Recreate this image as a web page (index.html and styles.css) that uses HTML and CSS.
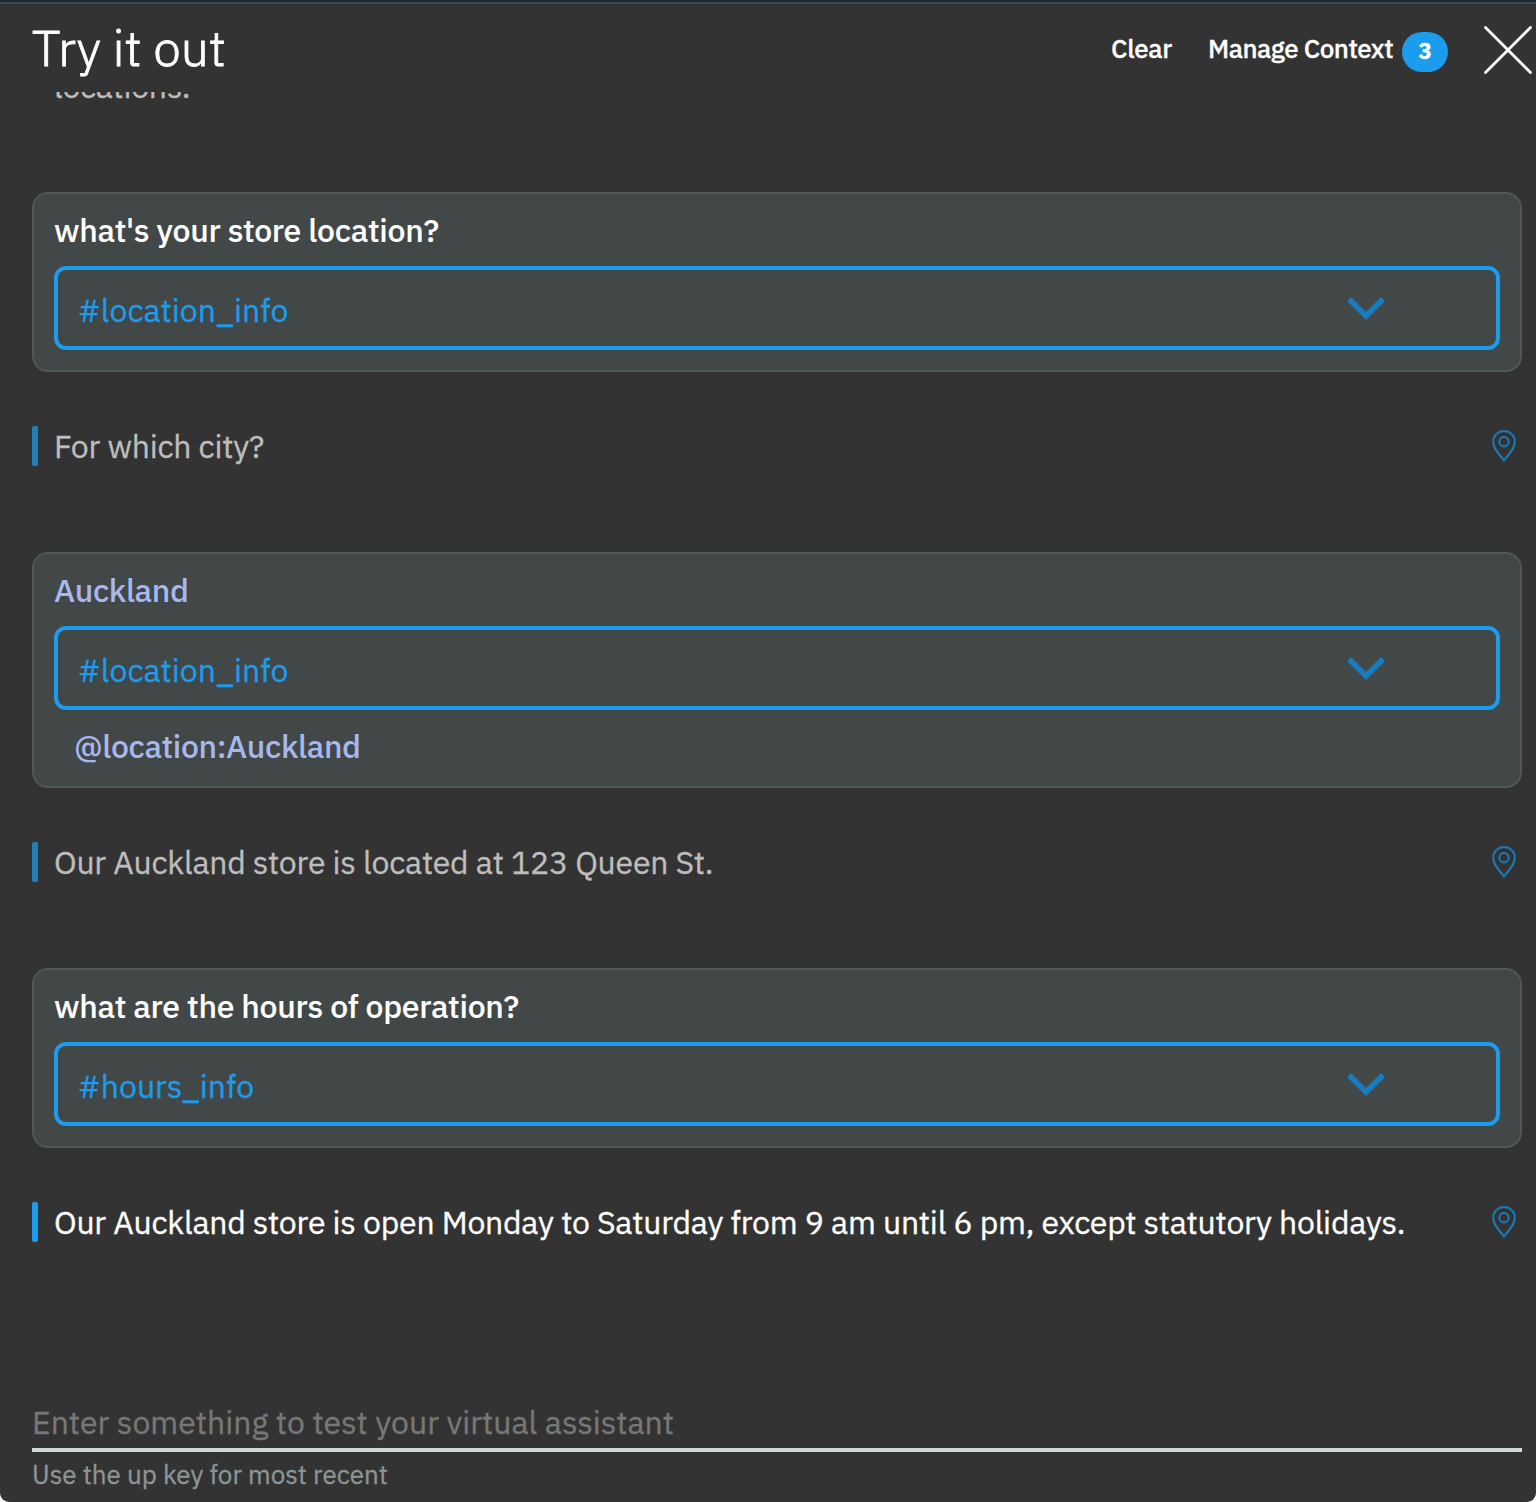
FILE: index.html
```html
<!DOCTYPE html>
<html lang="en">
<head>
<meta charset="utf-8">
<title>Try it out</title>
<link rel="stylesheet" href="styles.css">
</head>
<body>
<svg class="sprite" aria-hidden="true">
  <symbol id="pin" viewBox="0 0 24 32"><path d="M12 1C5.900 1 1.200 5.800 1.200 11.800c0 3 1.100 5.500 2.800 8.400L12 30.500l8-10.300c1.700-2.900 2.800-5.400 2.800-8.400C22.800 5.800 18.100 1 12 1z"/><circle cx="12" cy="11.700" r="4.700"/></symbol>
  <symbol id="chevron" viewBox="0 0 38 23"><path d="M0 3.900 3.900 0 19 15 34.100 0 38 3.900 19 23z"/></symbol>
</svg>
<main class="panel">
  <header class="header">
    <h1 class="title">Try it out</h1>
    <button class="action clear">Clear</button>
    <button class="action manage">Manage Context</button>
    <span class="badge">3</span>
    <button class="close" aria-label="Close"><svg width="48" height="48" viewBox="0 0 48 48"><path d="M1.500 1.500 46.500 46.500M46.500 1.500 1.500 46.500"/></svg></button>
  </header>
  <section class="chat">
    <p class="clipped">locations.</p>
    <article class="card">
      <p class="utterance">what's your store location?</p>
      <div class="intent"><span>#location_info</span><svg class="chevron"><use href="#chevron"/></svg></div>
    </article>
    <div class="reply old"><p>For which city?</p><svg class="pin"><use href="#pin"/></svg></div>
    <article class="card">
      <p class="utterance entity-text">Auckland</p>
      <div class="intent"><span>#location_info</span><svg class="chevron"><use href="#chevron"/></svg></div>
      <p class="entity">@location:Auckland</p>
    </article>
    <div class="reply old"><p>Our Auckland store is located at 123 Queen St.</p><svg class="pin"><use href="#pin"/></svg></div>
    <article class="card">
      <p class="utterance">what are the hours of operation?</p>
      <div class="intent"><span>#hours_info</span><svg class="chevron"><use href="#chevron"/></svg></div>
    </article>
    <div class="reply"><p>Our Auckland store is open Monday to Saturday from 9 am until 6 pm, except statutory holidays.</p><svg class="pin"><use href="#pin"/></svg></div>
  </section>
  <footer class="composer">
    <p class="field">Enter something to test your virtual assistant</p>
    <p class="hint">Use the up key for most recent</p>
  </footer>
</main>
</body>
</html>
```
FILE: styles.css
```css
* { box-sizing: border-box; }
body { margin: 0; background: #fff; font-family: "IBM Plex Sans", Roboto, sans-serif; font-size: 32px; line-height: 40px; color: #fff; -webkit-text-stroke: 0.3px; }
h1, p { margin: 0; font-weight: 400; white-space: nowrap; }
button { padding: 0; border: 0; background: none; color: inherit; font: inherit; }
.sprite { position: absolute; width: 0; height: 0; }
.panel { display: flex; flex-direction: column; height: 1502px; overflow: hidden; background: #333; border-top: 2px solid #1c2936; border-radius: 0 0 9px 9px; }
.header { display: flex; align-items: flex-start; flex: none; height: 90px; padding-left: 32px; border-top: 2px solid #424747; }
.title { flex: 1; padding-top: 14px; font-size: 50px; font-weight: 300; line-height: 60px; -webkit-text-stroke: 0.8px; }
.action { margin-top: 24px; font-size: 26px; font-weight: 500; line-height: 40px; white-space: nowrap; text-align: left; letter-spacing: -0.5px; }
.clear { width: 97px; letter-spacing: -0.35px; }
.manage { width: 194px; }
.badge { width: 46px; height: 40px; margin-top: 28px; border-radius: 20px; background: #1b9cec; font-size: 22px; font-weight: 700; line-height: 37px; text-align: center; }
.close { width: 48px; height: 48px; margin: 22px 4px 0 36px; }
.close svg { display: block; fill: none; stroke: #fff; stroke-width: 2.8; stroke-linecap: round; }
.chat { flex: 1; overflow: hidden; padding: 0 14px 0 32px; }
.clipped { margin-top: -26px; margin-bottom: 86px; padding-left: 22px; color: #bdbdbd; letter-spacing: -0.3px; }
.card { padding: 16px 20px 20px; border: 2px solid #505958; border-radius: 16px; background: #424747; }
.utterance { font-weight: 500; letter-spacing: -0.31px; -webkit-text-stroke: 0.1px; }
.entity-text, .entity { color: #a6b8ee; letter-spacing: -0.4px; font-weight: 500; -webkit-text-stroke: 0; }
.intent { display: flex; align-items: center; justify-content: space-between; height: 84px; margin-top: 16px; padding: 0 111px 0 20px; border: 4px solid #1b9cec; border-radius: 12px; color: #1b9cec; }
.intent span { padding-top: 3px; }
.chevron { width: 38px; height: 23px; fill: #187dc0; }
.entity { margin-top: 16px; padding-left: 20px; }
.reply { display: flex; justify-content: space-between; align-items: center; height: 40px; margin: 54px 0 86px; padding-right: 6px; }
.reply p { flex: 1; padding-left: 16px; letter-spacing: -0.23px; }
.reply::before { content: ""; width: 6px; height: 40px; border-radius: 2px; background: #1b9cec; }
.old { color: #bdbdbd; }
.old::before { background: #227fb9; }
.pin { width: 24px; height: 32px; fill: none; stroke: #187dc0; stroke-width: 2; }
.composer { flex: none; height: 100px; padding: 0 14px 0 32px; }
.field { height: 50px; border-bottom: 4px solid #cfdad7; color: #777; }
.hint { padding-top: 2px; font-size: 26px; color: #8c9696; }
```
